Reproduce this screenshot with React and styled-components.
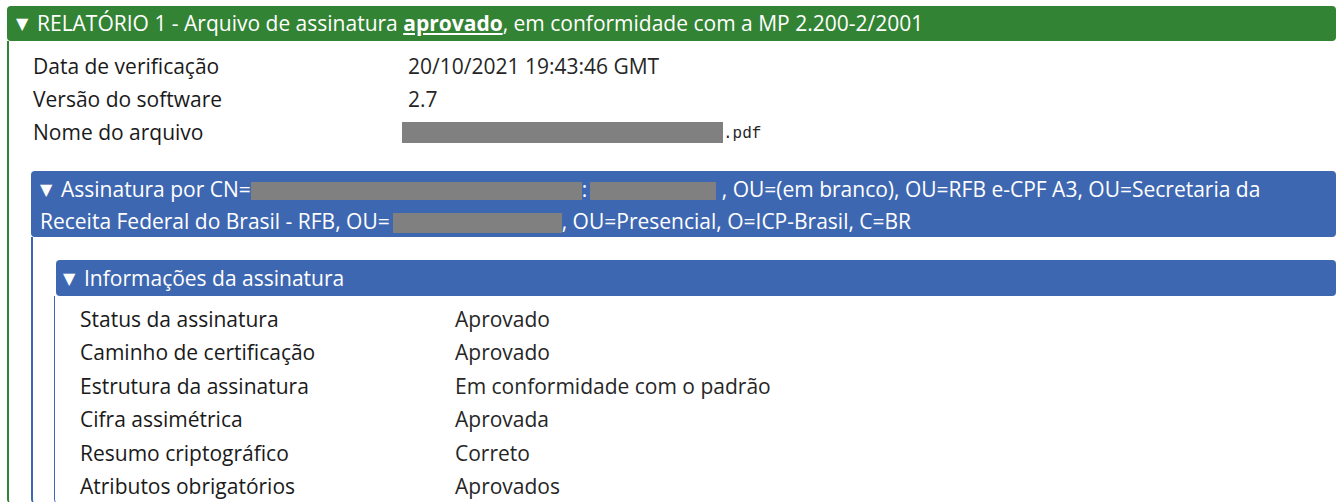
import React from "react";
import styled, { createGlobalStyle } from "styled-components";

const Global = createGlobalStyle`
  html, body { margin: 0; padding: 0; background: #fff; }
  body {
    font-family: "Open Sans", "Noto Sans", sans-serif;
    font-size: 21px;
    color: #1a1a1a;
  }
`;

const Page = styled.div`
  padding: 6px 5px 0 7px;
`;

const Section = styled.section`
  margin: ${(p) => p.$margin || "0"};
`;

const Header = styled.div`
  background: ${(p) => p.$color};
  color: #fff;
  border-radius: 4px;
  padding: ${(p) => p.$pad || "0 8px 0 9px"};
  line-height: ${(p) => p.$lh || "35px"};
  min-height: ${(p) => p.$minh || "0px"};
  box-sizing: border-box;
  margin-left: ${(p) => p.$inset || "0"};
`;

const Arrow = styled.span`
  font-family: "DejaVu Sans", sans-serif;
  font-size: 16px;
  line-height: 1;
  display: inline-block;
  width: 21px;
  vertical-align: 2px;
`;

const Strong = styled.b`
  text-decoration: underline;
  font-weight: 700;
`;

const Body = styled.div`
  border-left: ${(p) => p.$bw || "2px"} solid ${(p) => p.$color};
  border-bottom-left-radius: 4px;
  padding: ${(p) => p.$pad};
`;

const InfoList = styled.div`
  display: grid;
  grid-template-columns: ${(p) => p.$col}px 1fr;
  grid-auto-rows: ${(p) => p.$lh}px;
  line-height: ${(p) => p.$lh}px;
  padding-left: ${(p) => p.$left || 0}px;
`;

const Label = styled.div`
  color: #1a1a1a;
  white-space: nowrap;
`;

const Value = styled.div`
  color: #262626;
  white-space: nowrap;
  display: flex;
  align-items: center;
`;

const Redacted = styled.span`
  display: inline-block;
  background: #808080;
  width: ${(p) => p.$w}px;
  height: ${(p) => p.$h || 20}px;
  margin-left: ${(p) => p.$ml || 0}px;
  vertical-align: middle;
`;

const Mono = styled.span`
  font-family: "Liberation Mono", "DejaVu Sans Mono", monospace;
  font-size: 16px;
  line-height: 1;
  align-self: center;
  margin-top: 2px;
`;

const GREEN = "#338334";
const BLUE = "#3e67b1";

export default function App() {
  return (
    <>
      <Global />
      <Page>
        <Section>
          <Header $color={GREEN} $minh="35px">
            <Arrow>▼</Arrow>RELATÓRIO 1 - Arquivo de assinatura <Strong>aprovado</Strong>, em conformidade com a MP 2.200-2/2001
          </Header>
          <Body $color={GREEN} $pad="9px 0 0 22px">
            <InfoList $col={375} $lh={33} $left={2}>
              <Label>Data de verificação</Label>
              <Value>20/10/2021 19:43:46 GMT</Value>
              <Label>Versão do software</Label>
              <Value>2.7</Value>
              <Label>Nome do arquivo</Label>
              <Value>
                <Redacted $w={321} $h={21} $ml={-6} />
                <Mono>.pdf</Mono>
              </Value>
            </InfoList>
            <Section $margin="22px 0 0 0">
              <Header $color={BLUE} $lh="32px" $pad="2px 8px 0 9px" $minh="66px">
                <Arrow>▼</Arrow>Assinatura por CN=<Redacted $w={331} $h={18} />:<Redacted $w={126} $h={18} $ml={3} /> , OU=(em branco), OU=RFB e-CPF A3, OU=Secretaria da Receita Federal do Brasil - RFB, OU=<Redacted $w={169} $h={20} $ml={3} />, OU=Presencial, O=ICP-Brasil, C=BR
              </Header>
              <Body $color={BLUE} $pad="23px 0 0 21px">
                <Section>
                  <Header $color={BLUE} $lh="36px" $pad="0 8px 0 7px" $inset="2px" $minh="36px">
                    <Arrow>▼</Arrow>Informações da assinatura
                  </Header>
                  <Body $color={BLUE} $bw="1px" $pad="7px 0 0 25px">
                    <InfoList $col={375} $lh={33.4}>
                      <Label>Status da assinatura</Label>
                      <Value>Aprovado</Value>
                      <Label>Caminho de certificação</Label>
                      <Value>Aprovado</Value>
                      <Label>Estrutura da assinatura</Label>
                      <Value>Em conformidade com o padrão</Value>
                      <Label>Cifra assimétrica</Label>
                      <Value>Aprovada</Value>
                      <Label>Resumo criptográfico</Label>
                      <Value>Correto</Value>
                      <Label>Atributos obrigatórios</Label>
                      <Value>Aprovados</Value>
                    </InfoList>
                  </Body>
                </Section>
              </Body>
            </Section>
          </Body>
        </Section>
      </Page>
    </>
  );
}
